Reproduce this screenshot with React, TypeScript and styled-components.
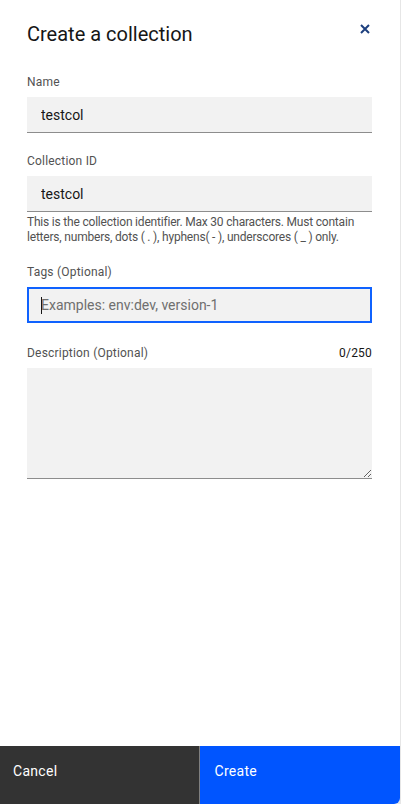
import { FC } from "react";
import styled, { createGlobalStyle } from "styled-components";

const GlobalStyle = createGlobalStyle`
  html, body {
    margin: 0;
    padding: 0;
    background: #e6e6e6;
  }
  * {
    box-sizing: border-box;
  }
`;

const StyledPanel = styled.div`
  width: 400px;
  min-height: 100vh;
  background-color: #fff;
  display: flex;
  flex-direction: column;
  font-family: Roboto, "Noto Sans", sans-serif;
  color: #161616;
  border-bottom-right-radius: 6px;
  overflow: hidden;
`;

const Header = styled.div`
  display: flex;
  justify-content: space-between;
  align-items: flex-start;
  padding: 20px 27px 0 27px;
  h2 {
    margin: 0;
    font-size: 20px;
    line-height: 28px;
    font-weight: 400;
  }
`;

const CloseButton = styled.button`
  border: none;
  background: none;
  padding: 0;
  margin: -1px -2px 0 0;
  width: 20px;
  height: 20px;
  display: flex;
  align-items: center;
  justify-content: center;
  color: #1d3f7e;
  cursor: pointer;
`;

const Form = styled.div`
  flex: 1;
  padding: 26px 28px 0 27px;
  display: flex;
  flex-direction: column;
`;

const FormItem = styled.div<{ $spacing: number }>`
  display: flex;
  flex-direction: column;
  margin-bottom: ${(p) => p.$spacing}px;
`;

const LabelRow = styled.div`
  display: flex;
  justify-content: space-between;
  margin-bottom: 7px;
  font-size: 12px;
  line-height: 16px;
  letter-spacing: 0.2px;
  label {
    color: #525252;
  }
  span {
    color: #161616;
  }
`;

const TextInput = styled.input<{ $focused?: boolean }>`
  width: 100%;
  height: 36px;
  border: none;
  border-bottom: 1px solid #8d8d8d;
  background: #f2f2f2;
  padding: 0 14px;
  font-family: inherit;
  font-size: 14px;
  color: #161616;
  outline: ${(p) => (p.$focused ? "2px solid #0f62fe" : "none")};
  outline-offset: -2px;
  ${(p) => p.$focused && "border-bottom-color: transparent;"}
  &::placeholder {
    color: #6f6f6f;
  }
`;

const Caret = styled.div`
  position: relative;
  span {
    position: absolute;
    left: 14px;
    top: 10px;
    width: 1px;
    height: 17px;
    background: #161616;
  }
`;

const HelperText = styled.div`
  margin-top: 3px;
  font-size: 12px;
  line-height: 15px;
  color: #525252;
  letter-spacing: -0.2px;
`;

const TextArea = styled.textarea`
  width: 100%;
  height: 111px;
  border: none;
  border-bottom: 1px solid #8d8d8d;
  background: #f2f2f2;
  padding: 11px 13px;
  font-family: inherit;
  font-size: 14px;
  outline: none;
  display: block;
`;

const Footer = styled.div`
  display: flex;
  height: 58px;
`;

const FooterButton = styled.button<{ $primary?: boolean }>`
  flex: 1;
  border: none;
  text-align: left;
  padding: 0 14px 8px 14px;
  font-family: inherit;
  font-size: 14px;
  letter-spacing: 0.3px;
  color: #fff;
  background: ${(p) => (p.$primary ? "#0055ff" : "#333333")};
  border-left: ${(p) => (p.$primary ? "1px solid #7f7f7f" : "none")};
  padding-left: ${(p) => (p.$primary ? "15px" : "13px")};
  cursor: pointer;
`;

const App: FC = () => {
  return (
    <>
      <GlobalStyle />
      <StyledPanel>
        <Header>
          <h2>Create a collection</h2>
          <CloseButton aria-label="Close">
            <svg width="12" height="12" viewBox="0 0 12 12">
              <path
                d="M2 2 L10 10 M10 2 L2 10"
                stroke="currentColor"
                strokeWidth="2"
              />
            </svg>
          </CloseButton>
        </Header>
        <Form>
          <FormItem $spacing={20}>
            <LabelRow>
              <label htmlFor="name">Name</label>
            </LabelRow>
            <TextInput id="name" defaultValue="testcol" />
          </FormItem>
          <FormItem $spacing={19}>
            <LabelRow>
              <label htmlFor="cid">Collection ID</label>
            </LabelRow>
            <TextInput id="cid" defaultValue="testcol" />
            <HelperText>
              This is the collection identifier. Max 30 characters. Must contain
              letters, numbers, dots ( . ), hyphens( - ), underscores ( _ ) only.
            </HelperText>
          </FormItem>
          <FormItem $spacing={22}>
            <LabelRow>
              <label htmlFor="tags">Tags (Optional)</label>
            </LabelRow>
            <Caret>
              <TextInput
                id="tags"
                $focused
                placeholder="Examples: env:dev, version-1"
              />
              <span />
            </Caret>
          </FormItem>
          <FormItem $spacing={0}>
            <LabelRow>
              <label htmlFor="desc">Description (Optional)</label>
              <span>0/250</span>
            </LabelRow>
            <TextArea id="desc" />
          </FormItem>
        </Form>
        <Footer>
          <FooterButton>Cancel</FooterButton>
          <FooterButton $primary>Create</FooterButton>
        </Footer>
      </StyledPanel>
    </>
  );
};

export default App;
